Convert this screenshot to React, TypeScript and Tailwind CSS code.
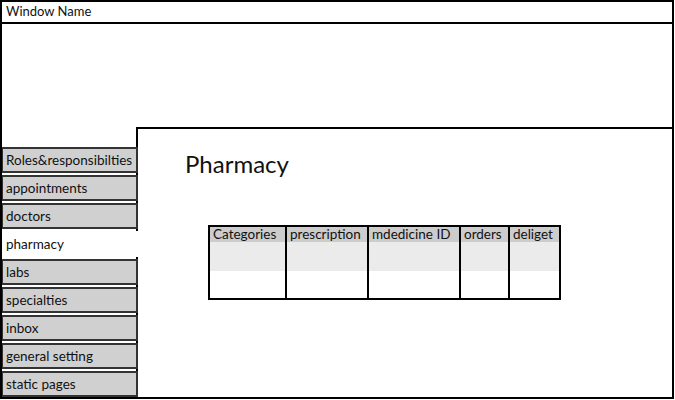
const tabs = [
  { label: "Roles&responsibilties" },
  { label: "appointments" },
  { label: "doctors" },
  { label: "pharmacy", active: true },
  { label: "labs" },
  { label: "specialties" },
  { label: "inbox" },
  { label: "general setting" },
  { label: "static pages" },
];

// widths include the 2px left divider for every column after the first
const columns = [
  { title: "Categories", w: "w-[75px]" },
  { title: "prescription", w: "w-[82px]" },
  { title: "mdedicine ID", w: "w-[92px]" },
  { title: "orders", w: "w-[49px]" },
  { title: "deliget", w: "w-[51px]" },
];

export default function App() {
  return (
    <div className="w-[675px] h-[400px] bg-white font-['Lato','Open_Sans',sans-serif] text-[#111]">
      <div className="w-[674px] h-[399px] border-2 border-black flex flex-col">
        {/* title bar */}
        <div className="h-[22px] border-b-2 border-black px-[4px] flex items-center text-[13px]">
          Window Name
        </div>

        <div className="flex-1 flex items-end">
          {/* tabs */}
          <div className="w-[134px] flex flex-col gap-[2px] relative z-10">
            {tabs.map((t) =>
              t.active ? (
                <div key={t.label} className="h-[26px] w-[136px] bg-white px-[4px] flex items-center text-[13.5px]">
                  {t.label}
                </div>
              ) : (
                <div
                  key={t.label}
                  className="h-[26px] w-[136px] bg-[#d0d0d0] border border-[#333] border-t-2 border-r-2 border-b-2 px-[3px] flex items-center text-[13.5px]"
                >
                  {t.label}
                </div>
              )
            )}
          </div>

          {/* panel */}
          <div className="flex-1 h-[270px] border-t-2 border-l-2 border-black">
            <div className="pl-[47px] pt-[21px] text-[24px] leading-[28px]">Pharmacy</div>
            <div className="ml-[70px] mt-[47px] w-[353px] border-2 border-black flex text-[13.5px]">
              {columns.map((c, i) => (
                <div key={c.title} className={`${c.w} shrink-0 flex flex-col ${i > 0 ? "border-l-2 border-black" : ""}`}>
                  <div className="h-[15px] bg-[#cccccc] px-[3px] flex items-center leading-none whitespace-nowrap overflow-hidden">
                    {c.title}
                  </div>
                  <div className="h-[29px] bg-[#ebebeb]" />
                  <div className="h-[27px] bg-white" />
                </div>
              ))}
            </div>
          </div>
        </div>
      </div>
    </div>
  );
}
